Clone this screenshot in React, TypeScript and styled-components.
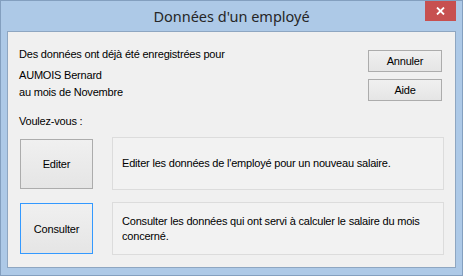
import styled, { createGlobalStyle } from "styled-components"

const Global = createGlobalStyle`
    html, body {
        margin    : 0;
        padding   : 0;
        background: #ffffff;
    }
    body {
        font-family   : "Liberation Sans", Arial, sans-serif;
        font-size     : 11px;
        letter-spacing: -0.2px;
        color         : #000;
    }
`

const Window = styled.div`
    position        : relative;
    box-sizing      : border-box;
    width           : 463px;
    height          : 276px;
    display         : flex;
    flex-direction  : column;
    border          : 1px solid #839fbf;
    background-color: #adc9e7;
    padding         : 0 6px 7px 6px;
`

const TitleBar = styled.div`
    position       : relative;
    height         : 30px;
    display        : flex;
    align-items    : center;
    justify-content: center;
`

const Title = styled.span`
    font-family   : "Noto Sans", "Open Sans", sans-serif;
    font-size     : 14.5px;
    letter-spacing: 0;
    color         : #262626;
    margin-top    : -1px;
`

const CloseButton = styled.div`
    position        : absolute;
    top             : 0;
    right           : 0;
    width           : 31px;
    height          : 20px;
    display         : flex;
    align-items     : center;
    justify-content : center;
    background-color: #c75050;
`

const Client = styled.div`
    flex            : 1;
    display         : flex;
    flex-direction  : column;
    border          : 1px solid #8ea6c1;
    background-color: #f0f0f0;
    padding         : 16px 11px 0 11px;
`

const Top = styled.div`
    display        : flex;
    justify-content: space-between;
    align-items    : flex-start;
`

const Info = styled.div`
    display       : flex;
    flex-direction: column;
`

const Line = styled.div<{ $gap?: number }>`
    line-height: 13px;
    margin-top : ${p => p.$gap ?? 0}px;
`

const SideButtons = styled.div`
    display       : flex;
    flex-direction: column;
    gap           : 7px;
    margin-top    : 2px;
    margin-right  : 2px;
`

const Button = styled.button<{ $w: number; $h: number; $focused?: boolean }>`
    box-sizing    : border-box;
    width         : ${p => p.$w}px;
    height        : ${p => p.$h}px;
    padding       : 0;
    font-family   : "Liberation Sans", Arial, sans-serif;
    font-size     : 11px;
    letter-spacing: -0.2px;
    color         : #000;
    border        : 1px solid ${p => p.$focused ? "#3399ff" : "#acacac"};
    background    : linear-gradient(#f0f0f0, #e5e5e5);
    flex-shrink   : 0;
`

const Question = styled(Line)`
    margin-top: 14px;
`

const Options = styled.div`
    display       : flex;
    flex-direction: column;
    gap           : 12px;
    margin-top    : 9px;
    padding-left  : 1px;
`

const OptionRow = styled.div`
    display    : flex;
    align-items: center;
    gap        : 19px;
`

const Description = styled.div`
    box-sizing      : border-box;
    flex            : 1;
    height          : 53px;
    display         : flex;
    align-items     : center;
    padding         : 0 9px;
    border          : 1px solid #dcdcdc;
    background-color: #f2f2f2;
    line-height     : 15px;
`

export default function App() {
    return (
        <>
            <Global />
            <Window>
                <TitleBar>
                    <Title>Données d'un employé</Title>
                    <CloseButton>
                        <svg width="9" height="8" viewBox="0 0 9 8">
                            <path d="M1 0.5 L8 7.5 M8 0.5 L1 7.5" stroke="#fff" strokeWidth="1.8" />
                        </svg>
                    </CloseButton>
                </TitleBar>
                <Client>
                    <Top>
                        <Info>
                            <Line>Des données ont déjà été enregistrées pour</Line>
                            <Line $gap={8}>AUMOIS Bernard</Line>
                            <Line $gap={4}>au mois de Novembre</Line>
                        </Info>
                        <SideButtons>
                            <Button $w={74} $h={22}>Annuler</Button>
                            <Button $w={74} $h={22}>Aide</Button>
                        </SideButtons>
                    </Top>
                    <Question>Voulez-vous :</Question>
                    <Options>
                        <OptionRow>
                            <Button $w={73} $h={50}>Editer</Button>
                            <Description>Editer les données de l'employé pour un nouveau salaire.</Description>
                        </OptionRow>
                        <OptionRow>
                            <Button $w={73} $h={51} $focused>Consulter</Button>
                            <Description>
                                Consulter les données qui ont servi à calculer le salaire du mois<br />concerné.
                            </Description>
                        </OptionRow>
                    </Options>
                </Client>
            </Window>
        </>
    )
}
